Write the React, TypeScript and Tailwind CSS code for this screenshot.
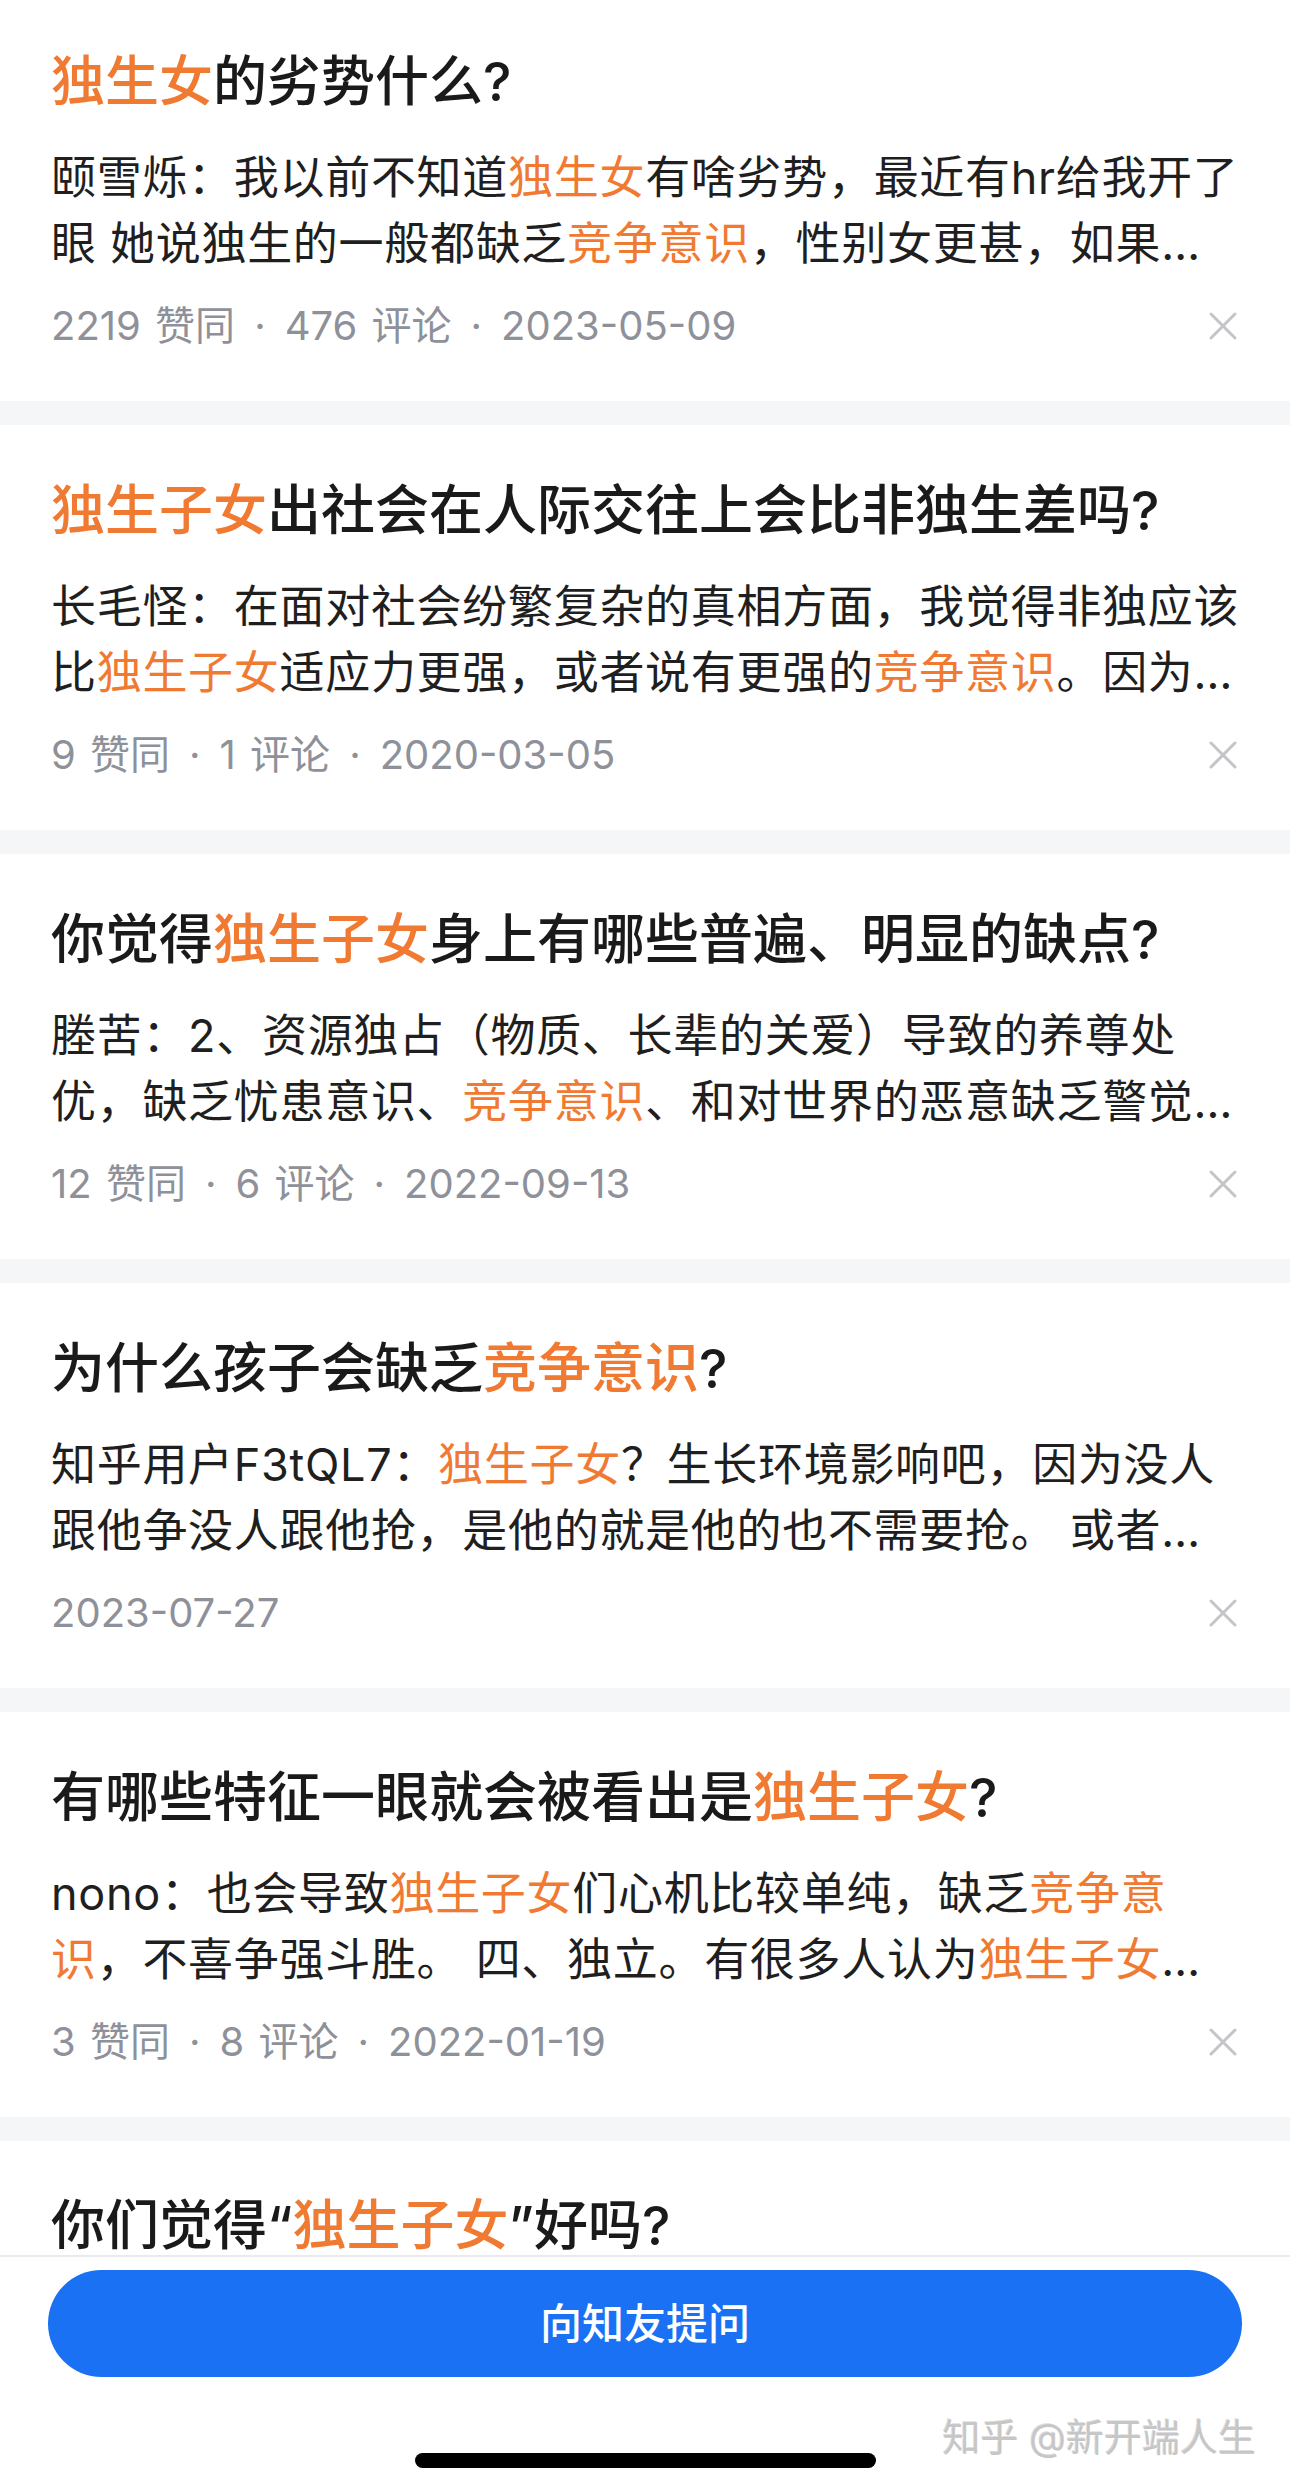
import React from "react";

type Seg = string | { h: string };

type Card = {
  title: Seg[];
  body: Seg[][];
  meta: string[];
};

const cards: Card[] = [
  {
    title: [{ h: "独生女" }, "的劣势什么?"],
    body: [
      ["颐雪烁：我以前不知道", { h: "独生女" }, "有啥劣势，最近有hr给我开了"],
      ["眼 她说独生的一般都缺乏", { h: "竞争意识" }, "，性别女更甚，如果…"],
    ],
    meta: ["2219 赞同", "476 评论", "2023-05-09"],
  },
  {
    title: [{ h: "独生子女" }, "出社会在人际交往上会比非独生差吗?"],
    body: [
      ["长毛怪：在面对社会纷繁复杂的真相方面，我觉得非独应该"],
      ["比", { h: "独生子女" }, "适应力更强，或者说有更强的", { h: "竞争意识" }, "。因为…"],
    ],
    meta: ["9 赞同", "1 评论", "2020-03-05"],
  },
  {
    title: ["你觉得", { h: "独生子女" }, "身上有哪些普遍、明显的缺点?"],
    body: [
      ["塍苦：2、资源独占（物质、长辈的关爱）导致的养尊处"],
      ["优，缺乏忧患意识、", { h: "竞争意识" }, "、和对世界的恶意缺乏警觉…"],
    ],
    meta: ["12 赞同", "6 评论", "2022-09-13"],
  },
  {
    title: ["为什么孩子会缺乏", { h: "竞争意识" }, "?"],
    body: [
      ["知乎用户F3tQL7：", { h: "独生子女" }, "？生长环境影响吧，因为没人"],
      ["跟他争没人跟他抢，是他的就是他的也不需要抢。 或者…"],
    ],
    meta: ["2023-07-27"],
  },
  {
    title: ["有哪些特征一眼就会被看出是", { h: "独生子女" }, "?"],
    body: [
      ["nono：也会导致", { h: "独生子女" }, "们心机比较单纯，缺乏", { h: "竞争意" }],
      [{ h: "识" }, "，不喜争强斗胜。 四、独立。有很多人认为", { h: "独生子女" }, "…"],
    ],
    meta: ["3 赞同", "8 评论", "2022-01-19"],
  },
];

function Segs({ segs }: { segs: Seg[] }) {
  return (
    <>
      {segs.map((s, i) =>
        typeof s === "string" ? (
          <span key={i}>{s}</span>
        ) : (
          <span key={i} className="text-[#f07a32]">
            {s.h}
          </span>
        )
      )}
    </>
  );
}

function CloseIcon() {
  return (
    <svg width="30" height="30" viewBox="0 0 30 30" className="mr-[2px]">
      <path
        d="M3 3 L27 27 M27 3 L3 27"
        stroke="#c4c5c8"
        strokeWidth="3"
        strokeLinecap="round"
        fill="none"
      />
    </svg>
  );
}

function CardView({ card, first }: { card: Card; first: boolean }) {
  return (
    <div
      className={`bg-white pl-[51px] pr-[50px] pb-[50px] ${first ? "pt-[44px]" : "pt-[48px]"}`}
    >
      <div className="text-[54px] leading-[76px] font-medium text-[#1a1a1a] whitespace-nowrap">
        <Segs segs={card.title} />
      </div>
      <div className="mt-[25px] text-[45px] leading-[66px] tracking-[0.7px] text-[#1f1f1f] whitespace-nowrap">
        {card.body.map((line, i) => (
          <div key={i}>
            <Segs segs={line} />
          </div>
        ))}
      </div>
      <div className="mt-[24px] h-[50px] flex items-center justify-between">
        <div className="flex items-center text-[40px] leading-[50px] text-[#8e9199] whitespace-nowrap">
          {card.meta.map((m, i) => (
            <React.Fragment key={i}>
              {i > 0 && <span className="mx-[19px]">·</span>}
              <span className="[word-spacing:3px]">{m}</span>
            </React.Fragment>
          ))}
        </div>
        <CloseIcon />
      </div>
    </div>
  );
}

export default function App() {
  return (
    <div className="relative w-[1290px] h-[2492px] bg-white flex flex-col overflow-hidden font-['Inter','Noto_Sans_CJK_SC',sans-serif]">
      <div className="h-[2255px] shrink-0 overflow-hidden bg-[#f5f6f8] flex flex-col gap-[24px]">
        {cards.map((c, i) => (
          <CardView key={i} card={c} first={i === 0} />
        ))}
        <div className="bg-white pl-[51px] pr-[50px] pt-[56px] pb-[50px]">
          <div className="text-[54px] leading-[58px] font-medium text-[#1a1a1a] whitespace-nowrap">
            你们觉得“<span className="text-[#f07a32]">独生子女</span>”好吗?
          </div>
        </div>
      </div>
      <div className="flex-1 border-t-[2px] border-[#ebebed] bg-white flex flex-col items-center pt-[13px]">
        <div className="w-[1194px] h-[107px] rounded-full bg-[#1a71f4] flex items-center justify-center text-white text-[42px] font-medium">
          向知友提问
        </div>
        <div className="mt-[76px] w-[461px] h-[15px] rounded-full bg-black" />
      </div>
      <div className="absolute right-[34px] top-[2412px] text-[38px] leading-[50px] text-[#c6c6c6] [text-shadow:1px_1px_0_rgba(255,255,255,0.9),-1px_-1px_0_rgba(120,120,120,0.25)]">
        知乎 @新开端人生
      </div>
    </div>
  );
}
